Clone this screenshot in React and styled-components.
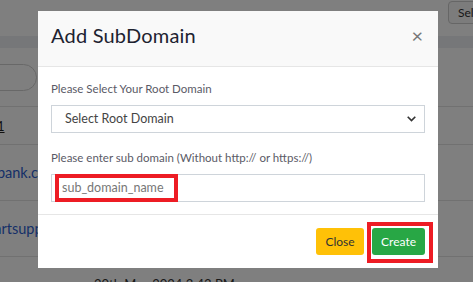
import styled, { createGlobalStyle } from "styled-components";

const GlobalStyle = createGlobalStyle`
  html, body {
    margin: 0;
    padding: 0;
    width: 473px;
    height: 282px;
    overflow: hidden;
    background: #fff;
    font-family: "Lato", "Noto Sans", sans-serif;
  }
`;

const App = () => {
  return (
    <>
      <GlobalStyle />
      <Page>
        <TopBar>
          <SelButton>Select</SelButton>
        </TopBar>
        <Band />
        <SearchRow>
          <SearchPill />
        </SearchRow>
        <Row height={38}>
          <PageLink>1</PageLink>
        </Row>
        <Row height={56}>
          <DomainLink>smartbank.com</DomainLink>
        </Row>
        <Row height={56}>
          <DomainLink shift={-24}>smartsupport.com</DomainLink>
        </Row>
        <Row height={54}>
          <DomainLink>mail</DomainLink>
          <DateText>20th May 2024 3:43 PM</DateText>
        </Row>
      </Page>
      <Overlay>
        <Modal>
          <Header>
            <Title>Add SubDomain</Title>
            <CloseX>×</CloseX>
          </Header>
          <Body>
            <Label>Please Select Your Root Domain</Label>
            <SelectBox>
              <span>Select Root Domain</span>
              <svg width="11" height="11" viewBox="0 0 16 16">
                <path d="M2.5 5.5 8 11l5.5-5.5" fill="none" stroke="#333" strokeWidth="2.4" />
              </svg>
            </SelectBox>
            <Label>Please enter sub domain (Without http:// or https://)</Label>
            <InputBox>
              <Highlight>sub_domain_name</Highlight>
            </InputBox>
          </Body>
          <Footer>
            <Btn bg="#ffc107" color="#333" pad={9.5}>Close</Btn>
            <Marked>
              <Btn bg="#28a745" color="#fff" pad={9}>Create</Btn>
            </Marked>
          </Footer>
        </Modal>
      </Overlay>
    </>
  );
};
export default App;

const Page = styled.div`
  width: 473px;
  height: 282px;
  display: flex;
  flex-direction: column;
  overflow: hidden;
`;

const TopBar = styled.div`
  height: 36px;
  display: flex;
  justify-content: flex-end;
  align-items: flex-start;
  padding-top: 1px;
  box-sizing: border-box;
  flex-shrink: 0;
`;

const SelButton = styled.div`
  margin-right: -39px;
  width: 64px;
  height: 23px;
  border: 1px solid #ccc;
  border-radius: 4px;
  font-size: 12px;
  color: #333;
  line-height: 22px;
  padding-left: 9px;
  box-sizing: border-box;
  background: #f8f8f8;
`;

const Band = styled.div`
  height: 12px;
  flex-shrink: 0;
  background: #eceff2;
`;

const SearchRow = styled.div`
  height: 59px;
  flex-shrink: 0;
  display: flex;
  align-items: center;
  border-bottom: 1px solid #e3e3e3;
  box-sizing: border-box;
`;

const SearchPill = styled.div`
  margin-left: -100px;
  width: 137px;
  height: 27px;
  border: 1px solid #d0d0d0;
  border-radius: 14px;
  box-sizing: border-box;
`;

const Row = styled.div`
  height: ${(p) => p.height}px;
  flex-shrink: 0;
  display: flex;
  align-items: center;
  border-bottom: 1px solid #e3e3e3;
  box-sizing: border-box;
  font-size: 14px;
  white-space: nowrap;
`;

const PageLink = styled.span`
  margin-left: -3px;
  color: #222;
  text-decoration: underline;
  font-size: 13px;
`;

const DomainLink = styled.span`
  margin-left: ${(p) => p.shift ?? -39}px;
  color: #2d5fd1;
  font-size: 14.5px;
  width: ${(p) => 170 + -(p.shift ?? -39) - 39}px;
  flex-shrink: 0;
`;

const DateText = styled.span`
  margin-left: -37px;
  color: #333;
  font-size: 13px;
`;

const Overlay = styled.div`
  position: fixed;
  inset: 0;
  background: rgba(0, 0, 0, 0.5);
  padding: 11px 0 0 38px;
  box-sizing: border-box;
`;

const Modal = styled.div`
  width: 400px;
  background: #fff;
  display: flex;
  flex-direction: column;
`;

const Header = styled.div`
  height: 56px;
  box-sizing: border-box;
  background: #f9f9f9;
  border-bottom: 1px solid #e6e6e6;
  display: flex;
  justify-content: space-between;
  align-items: flex-start;
  padding: 12px 13px 0 13px;
`;

const Title = styled.h2`
  margin: 0;
  font-weight: 400;
  font-size: 20px;
  color: #1d2230;
  letter-spacing: 0.2px;
`;

const CloseX = styled.span`
  font-size: 20px;
  color: #777;
  line-height: 20px;
  margin-top: 2px;
  margin-right: 2px;
`;

const Body = styled.div`
  padding: 14px 13px 12px 13px;
  display: flex;
  flex-direction: column;
  border-bottom: 1px solid #e6e6e6;
`;

const Label = styled.div`
  font-size: 11.5px;
  color: #5a5a66;
  line-height: 16px;
  margin-bottom: 8px;
`;

const SelectBox = styled.div`
  height: 28px;
  border: 1px solid #ced4da;
  box-sizing: border-box;
  display: flex;
  align-items: center;
  justify-content: space-between;
  padding: 0 7px 2px 13px;
  font-size: 12.5px;
  color: #444;
  margin-bottom: 17px;
`;

const InputBox = styled.div`
  height: 28px;
  border: 1px solid #ced4da;
  box-sizing: border-box;
  display: flex;
  align-items: center;
  padding-left: 3px;
`;

const Highlight = styled.span`
  height: 28px;
  width: 123px;
  box-sizing: border-box;
  border: 4px solid #ed1c24;
  font-size: 12.5px;
  color: #777;
  padding-left: 3px;
  line-height: 19px;
  margin-top: -1px;
`;

const Footer = styled.div`
  height: 53px;
  display: flex;
  justify-content: flex-end;
  align-items: center;
  gap: 3px;
  padding-right: 5px;
`;

const Marked = styled.div`
  display: flex;
  border: 4px solid #ed1c24;
  padding: 2px 4px 4px 1px;
  margin-top: 2px;
`;

const Btn = styled.button`
  height: 27px;
  padding: 0 ${(p) => p.pad}px;
  border: none;
  border-radius: 3px;
  background: ${(p) => p.bg};
  color: ${(p) => p.color};
  font-family: "Lato", "Noto Sans", sans-serif;
  font-size: 12px;
`;
